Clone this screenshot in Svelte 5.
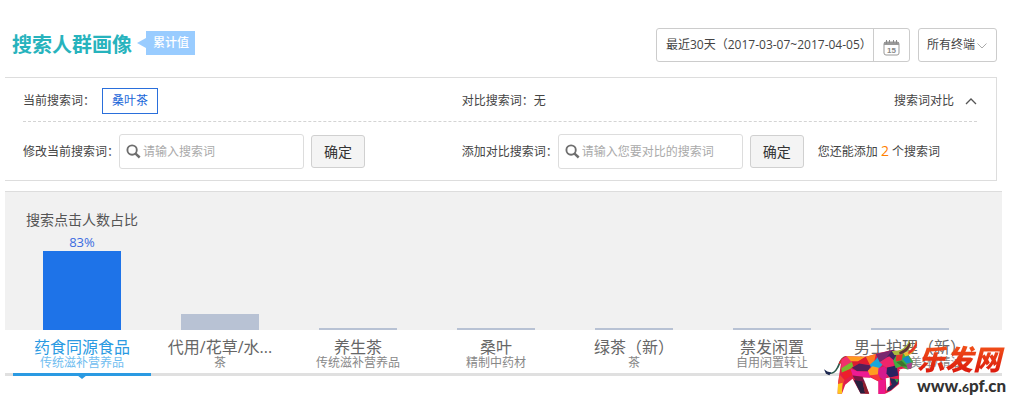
<script>
  let keyword = $state('');
  let compareKeyword = $state('');
  let terminal = $state('所有终端');
  let expanded = $state(true);
  let selected = $state(0);

  const remaining = 2;

  const categories = [
    { name: '药食同源食品', parent: '传统滋补营养品', share: 83 },
    { name: '代用/花草/水...', parent: '茶', share: 17 },
    { name: '养生茶', parent: '传统滋补营养品', share: 1 },
    { name: '桑叶', parent: '精制中药材', share: 1 },
    { name: '绿茶（新）', parent: '茶', share: 1 },
    { name: '禁发闲置', parent: '自用闲置转让', share: 1 },
    { name: '男士护理（新）', parent: '美容护肤/美体/精油', share: 1 },
  ];
</script>

{#snippet searchIcon()}
  <svg class="search-icon" viewBox="0 0 16 16" aria-hidden="true">
    <circle cx="6.5" cy="6.5" r="5" fill="none" stroke="#6e6e6e" stroke-width="2" />
    <path d="M10.2 10.2 L14.6 14.4" stroke="#6e6e6e" stroke-width="2.6" />
  </svg>
{/snippet}

<div class="page">
  <header>
    <h1>搜索人群画像</h1>
    <span class="badge">累计值</span>

    <div class="filters">
      <div class="date-range">
        <button class="range">最近30天（2017-03-07~2017-04-05）</button>
        <button class="calendar" aria-label="日历">
          <svg viewBox="0 0 17 17" aria-hidden="true">
            <rect x="1" y="3" width="15" height="13" rx="2" fill="#fff" stroke="#999" />
            <path d="M1 3h15v3H1z" fill="#999" />
            <path d="M3.5 1v4M6.5 1v3M10.5 1v3M13.5 1v4" stroke="#8a8a8a" />
            <text x="8.5" y="14" text-anchor="middle">15</text>
          </svg>
        </button>
      </div>
      <div class="select">
        <select bind:value={terminal} aria-label="终端">
          <option>所有终端</option>
          <option>PC端</option>
          <option>无线端</option>
        </select>
        <svg viewBox="0 0 10 6" aria-hidden="true">
          <path d="M.5 .5 5 5 9.5 .5" fill="none" stroke="#aaa" />
        </svg>
      </div>
    </div>
  </header>

  <section class="panel">
    <div class="row current">
      <div class="cell">
        <span>当前搜索词：</span>
        <span class="tag">桑叶茶</span>
      </div>
      <div class="cell">
        <span>对比搜索词：无</span>
        <button class="toggle" onclick={() => (expanded = !expanded)}>
          搜索词对比
          <svg viewBox="0 0 12 8" class:closed={!expanded} aria-hidden="true">
            <path d="M1 7 6 2 11 7" fill="none" stroke="#555" stroke-width="1.3" />
          </svg>
        </button>
      </div>
    </div>

    {#if expanded}
      <div class="row edit">
        <div class="cell">
          <label for="keyword">修改当前搜索词：</label>
          <div class="search">
            {@render searchIcon()}
            <input id="keyword" type="text" placeholder="请输入搜索词" bind:value={keyword} />
          </div>
          <button class="confirm">确定</button>
        </div>
        <div class="cell">
          <label for="compare">添加对比搜索词：</label>
          <div class="search">
            {@render searchIcon()}
            <input id="compare" type="text" placeholder="请输入您要对比的搜索词" bind:value={compareKeyword} />
          </div>
          <button class="confirm">确定</button>
          <span class="hint">您还能添加 <em>{remaining}</em> 个搜索词</span>
        </div>
      </div>
    {/if}
  </section>

  <section class="chart">
    <div class="plot">
      <h2>搜索点击人数占比</h2>
      <div class="columns bars">
        {#each categories as category, i}
          <div class="column" class:active={i === selected}>
            {#if i === selected}<span class="value">{category.share}%</span>{/if}
            <div class="bar" style="height: {category.share}%"></div>
          </div>
        {/each}
      </div>
    </div>

    <div class="columns names">
      {#each categories as category, i}
        <button class="name" class:active={i === selected} onclick={() => (selected = i)}>
          <span>{category.name}</span>
          <small>{category.parent}</small>
        </button>
      {/each}
    </div>

    <a class="logo" href="#home">
      <svg viewBox="50 15 280 167" aria-hidden="true">
        <!-- tail -->
        <path d="M118 68 C100 70 99 86 91 100 C85 112 78 118 66 118" fill="none" stroke="#2c5a4c" stroke-width="5" />
        <path d="M118 68 C106 70 101 78 96 89" fill="none" stroke="#d92a2a" stroke-width="5" />
        <path d="M50 105 L60 112 L72 115 L66 123 L56 119Z" fill="#1d2850" />
        <!-- body -->
        <path d="M103 76 L118 66 L176 68 L216 56 L256 47 L300 56 L316 82 L312 104 L286 104 L276 112 L276 150 L252 170 L236 178 L214 180 L214 142 L190 130 L165 130 L186 179 L160 178 L136 134 L114 152 L104 179 L91 179 L93 140Z" fill="#e01e4c" />
        <path d="M103 76 L118 66 L134 82 L112 98 L102 102Z" fill="#f0306c" />
        <path d="M118 66 L176 68 L152 82 L132 82Z" fill="#ff9a1f" />
        <path d="M132 82 L152 82 L176 68 L190 92 L158 88 L138 96Z" fill="#dc1c30" />
        <path d="M102 102 L134 83 L138 96 L128 106 L104 118Z" fill="#7cb82f" />
        <path d="M102 116 L130 104 L136 122 L112 138Z" fill="#ee1f2c" />
        <path d="M97 122 L112 138 L104 158 L92 154Z" fill="#f04a30" />
        <path d="M92 150 L106 146 L104 179 L91 179Z" fill="#ffc61d" />
        <path d="M134 101 L156 88 L192 94 L182 111 L150 111Z" fill="#512058" />
        <path d="M130 104 L150 111 L186 113 L190 131 L136 124Z" fill="#ed1b93" />
        <path d="M136 124 L166 128 L174 146 L146 142Z" fill="#7a1645" />
        <path d="M140 138 L166 142 L174 178 L160 178Z" fill="#28203d" />
        <path d="M166 142 L174 146 L186 179 L174 179Z" fill="#8b1e2d" />
        <path d="M176 68 L206 59 L200 88 L188 92Z" fill="#ff7a1e" />
        <path d="M188 92 L206 76 L216 62 L230 88 L214 104 L196 108Z" fill="#19a6da" />
        <path d="M182 110 L196 96 L226 104 L214 124 L188 124Z" fill="#ff9d20" />
        <path d="M206 60 L256 47 L246 66 L218 84Z" fill="#7a276e" />
        <path d="M256 47 L272 54 L262 80 L240 68Z" fill="#3d2762" />
        <path d="M218 84 L246 66 L262 80 L258 104 L232 98Z" fill="#ef256b" />
        <path d="M214 102 L232 96 L246 116 L232 140 L212 124Z" fill="#d51b8d" />
        <path d="M188 124 L214 120 L222 142 L206 138Z" fill="#f6353b" />
        <path d="M214 138 L236 138 L234 179 L214 180Z" fill="#ec168b" />
        <path d="M240 100 L268 94 L274 124 L248 130 L238 118Z" fill="#2b2261" />
        <path d="M236 132 L248 130 L248 154 L238 170Z" fill="#fff" />
        <path d="M248 132 L276 136 L272 150 L252 168 L240 172 L242 160 L254 152Z" fill="#262a56" />
        <path d="M262 134 L276 136 L270 146Z" fill="#37a34a" />
        <path d="M276 106 L290 104 L284 116Z" fill="#fff" />
        <!-- head and horns -->
        <path d="M258 80 L272 56 L302 58 L318 82 L312 104 L300 106 L284 96 L266 102Z" fill="#41ad42" />
        <path d="M268 60 L288 57 L284 78 L266 82Z" fill="#e3352b" />
        <path d="M286 74 L304 64 L312 84 L298 88Z" fill="#158bc4" />
        <path d="M268 84 L284 80 L302 98 L284 96Z" fill="#3d742e" />
        <path d="M298 90 L316 84 L313 103 L302 105Z" fill="#a6438d" />
        <path d="M254 50 C280 52 298 42 306 18 L312 32 C306 52 290 64 262 62Z" fill="#aab83e" />
        <path d="M276 54 C292 48 302 38 308 22 L310 34 C304 50 292 58 278 61Z" fill="#62323a" />
        <path d="M290 57 C308 52 322 40 328 17 L330 34 C324 53 310 65 294 66Z" fill="#e9bb31" />
        <path d="M304 52 C318 44 324 33 329 19 L330 34 C324 48 316 55 304 60Z" fill="#e3352b" />
      </svg>
      <span class="wordmark">
        <strong>乐发网</strong>
        <span class="domain">www.<small>6</small>pf.cn</span>
      </span>
    </a>
  </section>
</div>

<style>
  :global(body) {
    margin: 0;
    background: #fff;
  }

  .page {
    padding: 28px 13px 30px 5px;
    font-family: 'Open Sans', 'Noto Sans CJK SC', sans-serif;
    font-size: 12px;
    line-height: 20px;
    color: #444;
  }

  button, input, select {
    box-sizing: border-box;
    margin: 0;
    padding: 0;
    border: 0;
    background: none;
    font: inherit;
    color: inherit;
  }

  button {
    cursor: pointer;
  }

  svg {
    display: block;
    flex-shrink: 0;
  }

  header {
    display: flex;
    align-items: center;
    height: 34px;
    margin-bottom: 15px;
    padding: 0 5px 0 7px;
  }

  h1 {
    margin: 0;
    font-size: 20px;
    line-height: 30px;
    font-weight: 700;
    color: #27b3bd;
  }

  .badge {
    position: relative;
    margin-left: 14px;
    margin-bottom: 4px;
    padding: 0 6px 0 7px;
    background: #99ccff;
    color: #fff;
    font-weight: 500;
    line-height: 24px;
  }

  .badge::before {
    content: '';
    position: absolute;
    top: 7px;
    right: 100%;
    border: 5px solid transparent;
    border-right: 9px solid #99ccff;
    border-left: 0;
  }

  .filters {
    display: flex;
    gap: 8px;
    margin-left: auto;
  }

  .date-range, .select {
    display: flex;
    box-sizing: border-box;
    height: 34px;
    border: 1px solid #ccc;
    border-radius: 3px;
  }

  .range {
    width: 216px;
    padding-left: 9px;
    text-align: left;
    white-space: nowrap;
  }

  .calendar {
    display: flex;
    align-items: center;
    justify-content: center;
    width: 36px;
    padding-top: 4px;
    border-left: 1px solid #ccc;
  }

  .calendar svg {
    width: 17px;
    height: 17px;
  }

  .calendar text {
    font: 700 8px 'Liberation Sans', sans-serif;
    fill: #888;
  }

  .select {
    position: relative;
    width: 79px;
  }

  .select select {
    width: 100%;
    padding-left: 8px;
    appearance: none;
    outline: 0;
  }

  .select svg {
    position: absolute;
    top: 14px;
    right: 9px;
    width: 10px;
    height: 6px;
    pointer-events: none;
  }

  .panel {
    margin-right: 5px;
    padding: 0 19px 0 18px;
    border: 1px solid #ddd;
    border-left: 0;
  }

  .row {
    display: grid;
    grid-template-columns: minmax(0, 46fr) minmax(0, 54fr);
  }

  .cell {
    display: flex;
    align-items: center;
    white-space: nowrap;
  }

  .current {
    padding: 10px 0 7px;
    border-bottom: 1px dashed #d4d4d4;
  }

  .tag {
    margin-left: 7px;
    padding: 0 9px;
    border: 1px solid #2a6fdb;
    line-height: 24px;
    color: #1a66d9;
  }

  .toggle {
    display: flex;
    align-items: center;
    gap: 11px;
    margin-left: auto;
  }

  .toggle svg {
    width: 12px;
    height: 8px;
  }

  .toggle svg.closed {
    transform: rotate(180deg);
  }

  .edit {
    padding: 12px 0 11px;
  }

  .search {
    display: flex;
    align-items: center;
    gap: 2px;
    box-sizing: border-box;
    width: 185px;
    height: 35px;
    padding-left: 6px;
    border: 1px solid #ddd;
    border-radius: 3px;
  }

  .search-icon {
    width: 15px;
    height: 15px;
  }

  .search input {
    flex: 1;
    min-width: 0;
    outline: 0;
  }

  .search input::placeholder {
    color: #aaa;
    opacity: 1;
  }

  .confirm {
    width: 54px;
    height: 33px;
    margin-left: 7px;
    border: 1px solid #d0d0d0;
    border-radius: 3px;
    background: #f4f4f4;
    font-size: 14px;
    color: #333;
  }

  .hint {
    margin-left: 14px;
  }

  .hint em {
    font-size: 14px;
    font-style: normal;
    color: #ff7f00;
  }

  .chart {
    position: relative;
    margin-top: 10px;
  }

  .plot {
    border-top: 1px solid #ddd;
    background: #f1f1f1;
  }

  h2 {
    margin: 0;
    padding: 18px 0 0 21px;
    font-size: 14px;
    font-weight: 400;
    line-height: 20px;
    color: #555;
  }

  .columns {
    display: grid;
    grid-template-columns: repeat(7, minmax(0, 1fr));
    padding: 0 23px 0 8px;
  }

  .bars {
    height: 100px;
  }

  .column {
    display: flex;
    flex-direction: column;
    align-items: center;
    justify-content: flex-end;
    height: 95px;
    padding-top: 5px;
    text-align: center;
  }

  .value {
    font-size: 13px;
    line-height: 18px;
    color: #3a6be0;
  }

  .bar {
    flex-shrink: 0;
    width: 57%;
    min-height: 2px;
    background: #b8c2d4;
  }

  .active .bar {
    background: #1e73e8;
  }

  .names {
    border-bottom: 3px solid #e0e0e0;
  }

  .name {
    position: relative;
    display: flex;
    flex-direction: column;
    align-items: center;
    height: 46px;
    margin-bottom: -3px;
    padding-top: 9px;
    border-bottom: 3px solid transparent;
    font-size: 16px;
    line-height: 16px;
    color: #666;
    white-space: nowrap;
  }

  .name small {
    font-size: 12px;
    line-height: 16px;
    color: #888;
  }

  .name.active {
    border-color: #2a9ae2;
    color: #2a9ae2;
  }

  .name.active small {
    color: #70bdf0;
  }

  .name.active::after {
    content: '';
    position: absolute;
    top: 100%;
    left: 50%;
    margin: 2px 0 0 -5px;
    border: 5px solid transparent;
    border-top: 4px solid #2a9ae2;
    border-bottom: 0;
  }

  /* site mark laid over the bottom right corner of the chart */
  .logo {
    position: absolute;
    right: -4px;
    bottom: -22px;
    display: flex;
    align-items: flex-start;
    color: #333;
    text-decoration: none;
  }

  .logo svg {
    width: 93px;
    height: 56px;
  }

  .wordmark {
    display: flex;
    flex-direction: column;
    width: 89px;
    padding-top: 3px;
    white-space: nowrap;
  }

  .wordmark strong {
    font-size: 28px;
    font-style: italic;
    font-weight: 900;
    line-height: 34px;
    background: linear-gradient(#f4581a, #d8120c);
    background-clip: text;
    color: transparent;
  }

  .domain {
    font-family: Lato, sans-serif;
    font-size: 17px;
    font-weight: 900;
    line-height: 20px;
  }

  .domain small {
    font-size: 12px;
  }
</style>
